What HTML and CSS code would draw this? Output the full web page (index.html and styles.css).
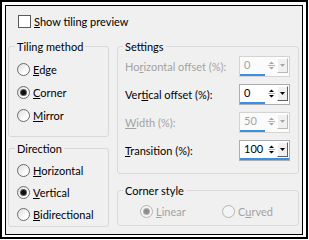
FILE: index.html
```html
<!DOCTYPE html>
<html>
  <head>
    <meta name="viewport" content="width=device-width, initial-scale=1.0" />
    <link rel="stylesheet" href="styles.css">
  </head>
  <body>
    <div class="frame">
      <div class="dialog">
        <label class="check-row">
          <span class="checkbox"></span>
          <span><u>S</u>how tiling preview</span>
        </label>

        <div class="columns">
          <div class="col-left">
            <fieldset class="group tiling">
              <legend>Tiling method</legend>
              <div class="radio-row"><span class="radio"></span><span><u>E</u>dge</span></div>
              <div class="radio-row"><span class="radio on"></span><span><u>C</u>orner</span></div>
              <div class="radio-row"><span class="radio"></span><span><u>M</u>irror</span></div>
            </fieldset>

            <fieldset class="group direction">
              <legend>Direction</legend>
              <div class="radio-row"><span class="radio"></span><span><u>H</u>orizontal</span></div>
              <div class="radio-row"><span class="radio on"></span><span><u>V</u>ertical</span></div>
              <div class="radio-row"><span class="radio"></span><span><u>B</u>idirectional</span></div>
            </fieldset>
          </div>

          <div class="col-right">
            <fieldset class="group settings">
              <legend>Settings</legend>

              <div class="field disabled">
                <span>Ho<u>r</u>izontal offset (%):</span>
                <div class="spin">
                  <div class="spin-top">
                    <span class="value">0</span>
                    <svg class="arrows" width="7" height="11" viewBox="0 0 7 11"><path d="M1 4 L3.5 1.5 L6 4 Z M1 7 L6 7 L3.5 9.5 Z"/><rect x="0" y="5" width="7" height="1" class="sep"/></svg>
                    <span class="drop"><svg width="5" height="3" viewBox="0 0 5 3"><path d="M0 0 H5 L2.5 3 Z"/></svg></span>
                  </div>
                  <div class="bar" style="width: 50%"></div>
                </div>
              </div>

              <div class="field">
                <span>Ver<u>t</u>ical offset (%):</span>
                <div class="spin">
                  <div class="spin-top">
                    <span class="value">0</span>
                    <svg class="arrows" width="7" height="11" viewBox="0 0 7 11"><path d="M1 4 L3.5 1.5 L6 4 Z M1 7 L6 7 L3.5 9.5 Z"/><rect x="0" y="5" width="7" height="1" class="sep"/></svg>
                    <span class="drop"><svg width="5" height="3" viewBox="0 0 5 3"><path d="M0 0 H5 L2.5 3 Z"/></svg></span>
                  </div>
                  <div class="bar" style="width: 50%"></div>
                </div>
              </div>

              <div class="field disabled">
                <span><u>W</u>idth (%):</span>
                <div class="spin">
                  <div class="spin-top">
                    <span class="value">50</span>
                    <svg class="arrows" width="7" height="11" viewBox="0 0 7 11"><path d="M1 4 L3.5 1.5 L6 4 Z M1 7 L6 7 L3.5 9.5 Z"/><rect x="0" y="5" width="7" height="1" class="sep"/></svg>
                    <span class="drop"><svg width="5" height="3" viewBox="0 0 5 3"><path d="M0 0 H5 L2.5 3 Z"/></svg></span>
                  </div>
                  <div class="bar" style="width: 50%"></div>
                </div>
              </div>

              <div class="field">
                <span><u>T</u>ransition (%):</span>
                <div class="spin">
                  <div class="spin-top">
                    <span class="value">100</span>
                    <svg class="arrows" width="7" height="11" viewBox="0 0 7 11"><path d="M1 4 L3.5 1.5 L6 4 Z M1 7 L6 7 L3.5 9.5 Z"/><rect x="0" y="5" width="7" height="1" class="sep"/></svg>
                    <span class="drop"><svg width="5" height="3" viewBox="0 0 5 3"><path d="M0 0 H5 L2.5 3 Z"/></svg></span>
                  </div>
                  <div class="bar" style="width: 100%"></div>
                </div>
              </div>
            </fieldset>

            <fieldset class="group corner">
              <legend>Corner style</legend>
              <div class="option-row">
                <div class="radio-row disabled linear"><span class="radio on"></span><span><u>L</u>inear</span></div>
                <div class="radio-row disabled"><span class="radio"></span><span>C<u>u</u>rved</span></div>
              </div>
            </fieldset>
          </div>
        </div>
      </div>
    </div>
  </body>
</html>
```

FILE: styles.css
```css
* {
  box-sizing: border-box;
  margin: 0;
  padding: 0;
}

body {
  background: #ffffff;
  font-family: Lato, "Open Sans", sans-serif;
  font-size: 11px;
  line-height: 15px;
  color: #000000;
}

u {
  text-decoration: underline;
  text-underline-offset: 1px;
}

.frame {
  width: 308px;
  height: 239px;
  border: 2px solid #000000;
  padding: 3px 3px 2px 3px;
  background: #ffffff;
}

.dialog {
  height: 100%;
  border: 1px solid #000000;
  background: #f0f0f0;
  padding: 8px 3px 0 2px;
}

.check-row {
  display: flex;
  align-items: center;
  gap: 3px;
  height: 15px;
  padding-left: 10px;
}

.checkbox {
  width: 13px;
  height: 13px;
  border: 1px solid #5a5a5a;
  background: #ffffff;
}

.columns {
  display: flex;
  gap: 8px;
  margin-top: 10px;
}

.col-left {
  width: 101px;
}

.col-right {
  width: 182px;
}

.group {
  border: 1px solid #d9d9d9;
  border-radius: 3px;
  min-width: 0;
}

.group legend {
  padding: 0 2px;
  margin-left: -2px;
  line-height: 15px;
}

.tiling {
  padding: 4px 0 9px 8px;
}

.direction {
  margin-top: 4px;
  padding: 3px 0 1px 8px;
}

.radio-row {
  display: flex;
  align-items: center;
  gap: 3px;
  height: 23px;
  white-space: nowrap;
}

.direction .radio-row {
  height: 22px;
}

.radio {
  flex: none;
  width: 13px;
  height: 13px;
  border-radius: 50%;
  border: 1px solid #6b6b6b;
  background: linear-gradient(135deg, #dcdcdc, #ffffff 70%);
  display: flex;
  align-items: center;
  justify-content: center;
}

.radio.on::after {
  content: '';
  width: 5px;
  height: 5px;
  border-radius: 50%;
  background: #111111;
  box-shadow: 0 0 0 1px #5c5c5c;
}

.settings {
  padding: 2px 8px 12px 7px;
  display: flex;
  flex-direction: column;
  gap: 7px;
}

.field {
  display: flex;
  justify-content: space-between;
  align-items: center;
  height: 21px;
  white-space: nowrap;
}

.field.disabled {
  color: #a3a3a3;
}

.spin {
  flex: none;
  width: 51px;
  height: 21px;
  border: 1px solid #abadb3;
  background: #ffffff;
  display: flex;
  flex-direction: column;
}

.spin-top {
  display: flex;
  align-items: center;
  height: 16px;
}

.value {
  flex: 1;
  padding-left: 4px;
  line-height: 16px;
}

.arrows {
  fill: #000000;
  margin-right: 2px;
}

.arrows .sep {
  fill: #b0b0b0;
}

.drop {
  width: 11px;
  height: 15px;
  margin-right: 1px;
  background: #f0f0f0;
  border-top: 1px solid #ffffff;
  border-left: 1px solid #ffffff;
  border-right: 1px solid #5f5f5f;
  border-bottom: 1px solid #5f5f5f;
  display: flex;
  align-items: center;
  justify-content: center;
}

.drop svg {
  fill: #000000;
}

.bar {
  height: 2px;
  margin-top: 1px;
  background: #3c8fdf;
}

.field.disabled .spin {
  border-color: #d4d4d4;
  background: #fbfbfb;
}

.field.disabled .arrows,
.field.disabled .drop svg {
  fill: #a8a8a8;
}

.field.disabled .drop {
  border-right-color: #b8b8b8;
  border-bottom-color: #b8b8b8;
}

.corner {
  margin-top: 9px;
  padding: 2px 0 2px 7px;
}

.option-row {
  display: flex;
  padding-left: 15px;
}

.linear {
  width: 82px;
}

.radio-row.disabled {
  color: #a3a3a3;
}

.radio-row.disabled .radio {
  border-color: #b5b5b5;
  background: #f4f4f4;
}

.radio-row.disabled .radio.on::after {
  background: #8c8c8c;
  box-shadow: 0 0 0 1px #b0b0b0;
}
```
